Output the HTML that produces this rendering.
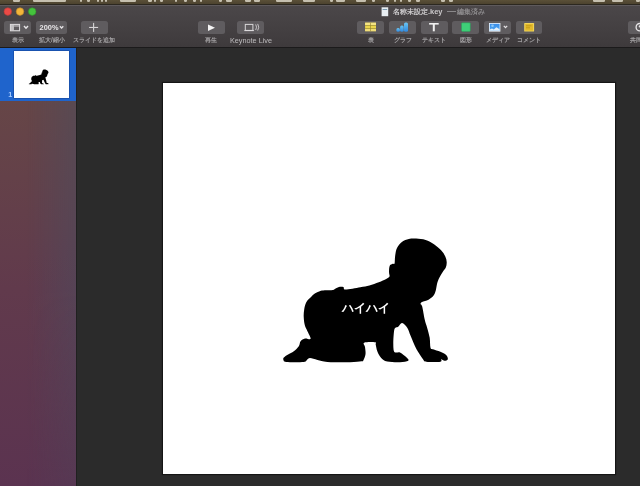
<!DOCTYPE html>
<html><head><meta charset="utf-8">
<style>
*{margin:0;padding:0;box-sizing:border-box}
html,body{width:640px;height:486px;overflow:hidden;background:#2b2b2b;font-family:"Liberation Sans",sans-serif}
.abs{position:absolute}
#menubar{left:0;top:0;width:640px;height:5px;background:linear-gradient(#5a5038,#4c432f);border-bottom:1px solid #2c2820}
.mb{top:0;height:1.8px;background:rgba(240,236,222,.72);border-radius:0 0 1.2px 1.2px}
#toolbar{left:0;top:5px;width:640px;height:42px;background:linear-gradient(#4b4749,#3e3a3c);border-top:1px solid #5e5a5c}
#tbline{left:0;top:46.6px;width:640px;height:1.2px;background:#1b1a1b}
.tl{width:8.4px;height:8.4px;border-radius:50%;top:7.7px}
.btn{height:13.4px;top:20.7px;background:#5f5c5f;border-radius:2.5px}
.lbl{will-change:transform;font-weight:bold;top:35px;height:9px;font-size:6.4px;line-height:9px;color:#a3a1a3;text-align:center;white-space:nowrap}
#sidebar{left:0;top:47.6px;width:76px;height:439px;background:linear-gradient(180deg,#674748 0%,#664647 12%,#613a4c 55%,#5b3350 100%)}
#sbov{left:0;top:47.6px;width:76px;height:439px;background:linear-gradient(90deg,rgba(70,80,100,0) 35%,rgba(70,80,100,.4) 100%);-webkit-mask-image:linear-gradient(180deg,#000 0%,#000 55%,rgba(0,0,0,.45) 100%);mask-image:linear-gradient(180deg,#000 0%,#000 55%,rgba(0,0,0,.45) 100%)}
#sbborder{left:76px;top:47.6px;width:1.3px;height:439px;background:#202020}
#sel{left:0;top:47.6px;width:76px;height:53.1px;background:#1f64cc}
#thumb{left:14.4px;top:51px;width:54.3px;height:46.7px;box-shadow:0 0 0 .5px rgba(0,0,40,.35);background:#fff}
#slide{left:163.3px;top:83.4px;width:451.8px;height:390.4px;background:#fff;box-shadow:0 0 1px 1px rgba(0,0,0,.5)}
#title{left:392.5px;top:6.5px;height:10px;font-size:7.45px;line-height:10px;color:#cac8ca;white-space:nowrap;will-change:transform;font-weight:bold}
#title2{left:457px;top:6.6px;height:10px;font-size:7.1px;line-height:10px;color:#8c8a8c;white-space:nowrap;will-change:transform;font-weight:bold}
</style></head><body>
<div id="menubar" class="abs"></div>
<div class="abs mb" style="left:13px;width:6.5px"></div><div class="abs mb" style="left:33px;width:33px"></div><div class="abs mb" style="left:80px;width:2px"></div><div class="abs mb" style="left:87px;width:3px"></div><div class="abs mb" style="left:97px;width:2px"></div><div class="abs mb" style="left:101px;width:2px"></div><div class="abs mb" style="left:105px;width:2px"></div><div class="abs mb" style="left:120px;width:16px"></div><div class="abs mb" style="left:148px;width:4px"></div><div class="abs mb" style="left:154px;width:2px"></div><div class="abs mb" style="left:160px;width:3px"></div><div class="abs mb" style="left:175px;width:2px"></div><div class="abs mb" style="left:184px;width:3px"></div><div class="abs mb" style="left:193px;width:3px"></div><div class="abs mb" style="left:200px;width:2px"></div><div class="abs mb" style="left:219px;width:3px"></div><div class="abs mb" style="left:226px;width:6px"></div><div class="abs mb" style="left:245px;width:6px"></div><div class="abs mb" style="left:254px;width:6px"></div><div class="abs mb" style="left:276px;width:16px"></div><div class="abs mb" style="left:303px;width:12px"></div><div class="abs mb" style="left:330px;width:3px"></div><div class="abs mb" style="left:336px;width:9px"></div><div class="abs mb" style="left:356px;width:10px"></div><div class="abs mb" style="left:372px;width:3px"></div><div class="abs mb" style="left:386px;width:3px"></div><div class="abs mb" style="left:394px;width:2px"></div><div class="abs mb" style="left:400px;width:2px"></div><div class="abs mb" style="left:408px;width:3px"></div><div class="abs mb" style="left:416px;width:4px"></div><div class="abs mb" style="left:441px;width:4px"></div><div class="abs mb" style="left:449px;width:4px"></div><div class="abs mb" style="left:593px;width:12px"></div><div class="abs mb" style="left:612px;width:11px"></div><div class="abs mb" style="left:636px;width:4px"></div>
<div id="toolbar" class="abs"></div>
<div id="tbline" class="abs"></div>
<svg class="abs" style="left:0;top:0" width="42" height="20" viewBox="0 0 42 20">
 <circle cx="7.8" cy="11.6" r="3.8" fill="#ea4a46" stroke="#b03a36" stroke-width=".6"/>
 <circle cx="20" cy="11.6" r="3.8" fill="#f2b53a" stroke="#b58528" stroke-width=".6"/>
 <circle cx="32.2" cy="11.6" r="3.8" fill="#45c33d" stroke="#2f8e2a" stroke-width=".6"/>
</svg>

<div class="abs btn" style="left:4.3px;width:26.8px"></div>
<div class="abs btn" style="left:36px;width:31px"></div>
<div class="abs btn" style="left:80.5px;width:27px"></div>
<div class="abs btn" style="left:198px;width:27px"></div>
<div class="abs btn" style="left:237px;width:26.8px"></div>
<div class="abs btn" style="left:357px;width:27px"></div>
<div class="abs btn" style="left:389px;width:27px"></div>
<div class="abs btn" style="left:420.5px;width:27px"></div>
<div class="abs btn" style="left:452px;width:27px"></div>
<div class="abs btn" style="left:484px;width:27px"></div>
<div class="abs btn" style="left:515.7px;width:26.5px"></div>
<div class="abs btn" style="left:627.8px;width:20px"></div>

<div class="abs lbl" style="left:3.6px;width:28px">表示</div>
<div class="abs lbl" style="left:31.8px;width:40px">拡大/縮小</div>
<div class="abs lbl" style="left:69.6px;width:48px">スライドを追加</div>
<div class="abs lbl" style="left:196.2px;width:30px">再生</div>
<div class="abs lbl" style="left:227px;top:36px;width:48px;font-size:7.3px;font-weight:normal;color:#bdbbbd">Keynote Live</div>
<div class="abs lbl" style="left:355.5px;width:30px">表</div>
<div class="abs lbl" style="left:387.5px;width:30px">グラフ</div>
<div class="abs lbl" style="left:419px;width:30px">テキスト</div>
<div class="abs lbl" style="left:450.5px;width:30px">図形</div>
<div class="abs lbl" style="left:482.5px;width:30px">メディア</div>
<div class="abs lbl" style="left:514px;width:30px">コメント</div>
<div class="abs lbl" style="left:630px;width:20px;text-align:left">共同</div>

<div class="abs" id="title">名称未設定.key</div><div class="abs" style="left:447.2px;top:11.4px;width:8.5px;height:.9px;background:#8a888a"></div><div class="abs" id="title2">編集済み</div>

<svg class="abs" style="left:0;top:0" width="640" height="47" viewBox="0 0 640 47">
 <rect x="381.6" y="7.3" width="6.6" height="8.9" fill="#e8eef2"/>
 <rect x="382.6" y="9" width="4.6" height="1" fill="#7a9ab0"/>
 <!-- view icon -->
 <rect x="10.4" y="24.4" width="9.2" height="6.4" fill="#9d9b9d"/>
 <rect x="10.9" y="24.9" width="3" height="5.4" fill="#c2c0c2"/>
 <rect x="14" y="26.9" width="5" height="3.2" fill="#5f5c5f"/>
 <rect x="10.4" y="24.4" width="9.2" height="6.4" fill="none" stroke="#dedcde" stroke-width="1"/>
 <polyline points="24,26.1 26,28.2 28,26.1" fill="none" stroke="#e6e4e6" stroke-width="1.5"/>
 <text x="39.6" y="29.9" font-family="Liberation Sans" font-weight="bold" font-size="7.4" fill="#e8e6e8">200%</text>
 <polyline points="59.9,26.3 61.6,28.0 63.3,26.3" fill="none" stroke="#e6e4e6" stroke-width="1.3"/>
 <!-- plus -->
 <rect x="89.1" y="26.9" width="9" height="1.1" fill="#d6d4d6"/>
 <rect x="93.05" y="22.9" width="1.1" height="9" fill="#d6d4d6"/>
 <!-- play -->
 <polygon points="208,24.5 208,31.1 215,27.8" fill="#f4f4f4"/>
 <!-- keynote live -->
 <rect x="245.3" y="24.4" width="7.6" height="6" fill="none" stroke="#d8d6d8" stroke-width="1"/>
 <rect x="244.4" y="30" width="9.4" height="1.1" fill="#dcdadc"/>
 <path d="M255.7,24.4 Q257.4,27.2 255.7,30 M257.7,23.9 Q259.8,27.2 257.7,30.5" fill="none" stroke="#d0ced0" stroke-width=".9"/>
 <!-- table -->
 <rect x="365.1" y="22.7" width="10.9" height="8.5" fill="#ead54c"/>
 <rect x="365.1" y="22.7" width="10.9" height="2.5" fill="#f4e484"/>
 <rect x="365.1" y="28.8" width="10.9" height="2.4" fill="#efdc78"/>
 <rect x="365.1" y="25.1" width="10.9" height=".6" fill="#8f8030"/>
 <rect x="365.1" y="28.2" width="10.9" height=".6" fill="#8f8030"/>
 <rect x="370.2" y="22.7" width=".6" height="8.5" fill="#8f8030"/>
 <!-- chart -->
 <defs><linearGradient id="cg" x1="0" y1="0" x2="0" y2="1"><stop offset="0" stop-color="#6cc6f2"/><stop offset="1" stop-color="#2d88e0"/></linearGradient>
 <linearGradient id="mg" x1="0" y1="0" x2="0" y2="1"><stop offset="0" stop-color="#3a8eea"/><stop offset="1" stop-color="#4fa6f2"/></linearGradient></defs>
 <rect x="396.4" y="28" width="3.5" height="3.8" rx="1.5" fill="url(#cg)"/>
 <rect x="400.1" y="25.4" width="3.6" height="6.4" rx="1.5" fill="url(#cg)"/>
 <rect x="404" y="22.4" width="4" height="9.4" rx="1.5" fill="url(#cg)"/>
 <!-- T -->
 <rect x="429.1" y="23" width="9.6" height="1.6" fill="#f0f0f0"/>
 <rect x="432.8" y="23" width="2.0" height="8.3" fill="#f0f0f0"/>
 <!-- shape -->
 <rect x="461.5" y="22.8" width="8.8" height="8.6" rx=".8" fill="#3fcf78" stroke="#2a9a58" stroke-width=".5"/>
 <!-- media -->
 <rect x="489" y="23" width="11.4" height="8.6" fill="#eef4fb"/>
 <rect x="489.8" y="23.8" width="9.8" height="7" fill="url(#mg)"/>
 <circle cx="492.5" cy="25.8" r="1.3" fill="#8cc8f8"/>
 <polygon points="489.8,30.8 489.8,29.6 492,28.6 493.8,29.4 496.4,27.2 499.6,29.2 499.6,30.8" fill="#e6f2fc"/>
 <polyline points="503.8,25.9 505.5,27.6 507.2,25.9" fill="none" stroke="#e6e4e6" stroke-width="1.3"/>
 <!-- comment -->
 <rect x="524.2" y="23" width="9.9" height="8.6" rx=".6" fill="#f2d55a"/>
 <rect x="525.2" y="24" width="7.9" height="6.6" fill="#e2b92c"/><rect x="526" y="25.3" width="5.5" height="1" fill="#c39a18"/><rect x="526" y="27.3" width="4" height="1" fill="#c39a18"/>
 <!-- share -->
 <circle cx="639.8" cy="27.2" r="3.7" fill="none" stroke="#e8e6e8" stroke-width="1.3"/><circle cx="639.8" cy="26.4" r="1.1" fill="#e8e6e8"/>
</svg>

<div id="sidebar" class="abs"></div>
<div id="sbov" class="abs"></div>
<div id="sel" class="abs"></div>
<div id="sbborder" class="abs"></div>
<div id="thumb" class="abs"></div>
<svg class="abs" style="left:0;top:0" width="100" height="110" viewBox="0 0 100 110"><g transform="translate(14.4,51) scale(0.12019,0.11962) translate(-163.3,-83.4)"><path d="M416.2,238.6C419.1,238.8 422.6,239.1 425.6,240.0C428.6,240.9 431.4,242.5 434.0,244.2C436.6,245.9 439.2,248.3 441.1,250.3C443.0,252.3 444.4,254.4 445.3,256.4C446.2,258.3 446.6,260.1 446.7,262.0C446.8,263.9 446.5,265.9 445.8,267.6C445.1,269.3 443.6,270.5 442.4,272.4C441.2,274.3 439.6,276.9 438.7,278.9C437.8,280.9 437.4,282.5 436.9,284.4C436.4,286.2 436.4,288.1 435.9,290.0C435.3,291.9 434.8,294.0 433.6,295.6C432.4,297.2 430.4,298.6 428.5,299.7C426.6,300.8 423.3,301.3 422.0,302.0C420.7,302.7 420.6,303.1 420.6,303.9C420.6,304.6 421.5,303.9 422.2,306.5C422.9,309.1 423.9,316.0 424.7,319.6C425.5,323.2 426.4,324.9 427.2,327.9C428.0,330.9 429.1,334.5 429.7,337.8C430.2,341.1 429.9,345.8 430.5,347.7C431.1,349.6 431.4,348.6 433.0,349.3C434.6,350.0 438.2,350.9 440.4,351.8C442.6,352.8 444.9,353.8 446.1,355.0C447.3,356.2 448.1,358.2 447.8,359.2C447.5,360.2 445.6,360.8 444.5,360.8C443.4,360.8 441.9,359.1 441.2,359.2C440.5,359.3 442.9,361.3 440.4,361.7C437.9,362.1 429.3,362.1 426.4,361.7C423.5,361.3 424.6,361.3 423.0,359.2C421.4,357.1 418.6,353.1 416.5,349.3C414.4,345.5 412.2,339.7 410.7,336.1C409.2,332.5 408.8,330.1 407.4,327.9C406.0,325.7 403.6,323.1 402.1,322.9C400.6,322.7 399.5,325.6 398.2,326.8C396.9,328.0 394.9,326.3 394.2,330.3C393.5,334.3 392.8,347.0 393.8,350.7C394.8,354.4 397.9,351.3 400.0,352.4C402.1,353.5 405.2,356.1 406.6,357.5C408.0,358.9 409.3,360.0 408.2,360.8C407.1,361.6 403.5,362.1 400.0,362.2C396.5,362.3 390.4,362.2 387.2,361.5C384.0,360.8 382.6,359.4 381.0,357.7C379.4,356.0 378.3,353.7 377.4,351.5C376.5,349.3 376.1,346.0 375.7,344.5C375.3,343.0 377.1,342.6 375.2,342.3C373.3,342.0 365.9,341.9 364.2,342.7C362.5,343.5 364.8,345.2 365.0,347.1C365.2,349.0 365.8,352.0 365.5,354.2C365.2,356.4 364.0,359.2 363.3,360.4C362.6,361.6 363.7,361.0 361.5,361.3C359.3,361.6 355.7,362.1 350.0,362.2C344.3,362.3 332.9,362.3 327.5,361.9C322.1,361.5 320.4,360.6 317.5,360.0C314.6,359.4 311.8,358.1 310.0,358.1C308.2,358.1 307.9,359.4 306.9,360.0C305.9,360.6 307.2,361.6 303.8,361.9C300.3,362.2 289.6,362.2 286.2,361.9C282.9,361.6 283.9,360.7 283.5,360.0C283.1,359.3 283.0,358.4 283.8,357.5C284.5,356.6 286.4,355.4 288.1,354.4C289.8,353.4 292.0,352.6 293.8,351.2C295.5,349.9 297.6,347.9 298.8,346.2C299.9,344.6 299.6,342.5 300.6,341.2C301.6,340.0 303.3,338.9 305.0,338.5C306.7,338.1 310.2,340.0 310.6,338.8C311.0,337.5 308.3,333.3 307.3,331.0C306.3,328.7 305.3,327.2 304.7,324.8C304.1,322.4 303.8,319.2 303.7,316.6C303.6,314.0 303.8,311.8 304.2,309.4C304.6,307.0 305.1,304.3 306.3,302.2C307.5,300.1 310.1,297.9 311.5,296.5C312.9,295.1 313.4,294.5 314.8,293.6C316.2,292.7 318.1,291.8 319.7,291.2C321.3,290.6 322.5,290.5 324.7,290.3C326.9,290.1 331.1,290.2 332.9,289.9C334.7,289.6 334.4,288.9 335.6,288.4C336.8,287.9 338.7,287.0 340.0,286.8C341.3,286.6 342.7,286.7 343.6,287.2C344.5,287.7 342.7,289.6 345.5,289.6C348.3,289.6 356.3,287.9 360.3,287.2C364.3,286.5 366.3,286.3 369.4,285.5C372.5,284.7 375.9,283.3 378.8,282.2C381.6,281.1 384.5,279.8 386.2,278.9C388.0,278.0 389.0,277.5 389.5,276.6C390.0,275.7 389.2,274.6 389.1,273.3C389.0,272.1 389.0,270.4 389.1,269.1C389.2,267.8 389.5,266.2 390.0,265.3C390.5,264.4 391.6,264.1 392.3,263.9C393.0,263.7 393.8,264.1 394.2,263.9C394.6,263.7 394.5,263.9 394.7,262.5C394.9,261.1 394.8,257.8 395.2,255.4C395.6,253.0 395.8,250.2 397.0,247.9C398.2,245.6 400.2,243.3 402.2,241.8C404.2,240.3 406.4,239.5 408.8,239.0C411.1,238.5 413.4,238.4 416.2,238.6Z" fill="#000"/></g></svg>
<div class="abs" style="left:8.2px;top:91.3px;font-size:7.2px;line-height:8px;color:#a8ccff;font-weight:bold">1</div>
<div id="slide" class="abs"></div>
<svg class="abs" style="left:0;top:0" width="640" height="486" viewBox="0 0 640 486"><path id="baby" d="M416.2,238.6C419.1,238.8 422.6,239.1 425.6,240.0C428.6,240.9 431.4,242.5 434.0,244.2C436.6,245.9 439.2,248.3 441.1,250.3C443.0,252.3 444.4,254.4 445.3,256.4C446.2,258.3 446.6,260.1 446.7,262.0C446.8,263.9 446.5,265.9 445.8,267.6C445.1,269.3 443.6,270.5 442.4,272.4C441.2,274.3 439.6,276.9 438.7,278.9C437.8,280.9 437.4,282.5 436.9,284.4C436.4,286.2 436.4,288.1 435.9,290.0C435.3,291.9 434.8,294.0 433.6,295.6C432.4,297.2 430.4,298.6 428.5,299.7C426.6,300.8 423.3,301.3 422.0,302.0C420.7,302.7 420.6,303.1 420.6,303.9C420.6,304.6 421.5,303.9 422.2,306.5C422.9,309.1 423.9,316.0 424.7,319.6C425.5,323.2 426.4,324.9 427.2,327.9C428.0,330.9 429.1,334.5 429.7,337.8C430.2,341.1 429.9,345.8 430.5,347.7C431.1,349.6 431.4,348.6 433.0,349.3C434.6,350.0 438.2,350.9 440.4,351.8C442.6,352.8 444.9,353.8 446.1,355.0C447.3,356.2 448.1,358.2 447.8,359.2C447.5,360.2 445.6,360.8 444.5,360.8C443.4,360.8 441.9,359.1 441.2,359.2C440.5,359.3 442.9,361.3 440.4,361.7C437.9,362.1 429.3,362.1 426.4,361.7C423.5,361.3 424.6,361.3 423.0,359.2C421.4,357.1 418.6,353.1 416.5,349.3C414.4,345.5 412.2,339.7 410.7,336.1C409.2,332.5 408.8,330.1 407.4,327.9C406.0,325.7 403.6,323.1 402.1,322.9C400.6,322.7 399.5,325.6 398.2,326.8C396.9,328.0 394.9,326.3 394.2,330.3C393.5,334.3 392.8,347.0 393.8,350.7C394.8,354.4 397.9,351.3 400.0,352.4C402.1,353.5 405.2,356.1 406.6,357.5C408.0,358.9 409.3,360.0 408.2,360.8C407.1,361.6 403.5,362.1 400.0,362.2C396.5,362.3 390.4,362.2 387.2,361.5C384.0,360.8 382.6,359.4 381.0,357.7C379.4,356.0 378.3,353.7 377.4,351.5C376.5,349.3 376.1,346.0 375.7,344.5C375.3,343.0 377.1,342.6 375.2,342.3C373.3,342.0 365.9,341.9 364.2,342.7C362.5,343.5 364.8,345.2 365.0,347.1C365.2,349.0 365.8,352.0 365.5,354.2C365.2,356.4 364.0,359.2 363.3,360.4C362.6,361.6 363.7,361.0 361.5,361.3C359.3,361.6 355.7,362.1 350.0,362.2C344.3,362.3 332.9,362.3 327.5,361.9C322.1,361.5 320.4,360.6 317.5,360.0C314.6,359.4 311.8,358.1 310.0,358.1C308.2,358.1 307.9,359.4 306.9,360.0C305.9,360.6 307.2,361.6 303.8,361.9C300.3,362.2 289.6,362.2 286.2,361.9C282.9,361.6 283.9,360.7 283.5,360.0C283.1,359.3 283.0,358.4 283.8,357.5C284.5,356.6 286.4,355.4 288.1,354.4C289.8,353.4 292.0,352.6 293.8,351.2C295.5,349.9 297.6,347.9 298.8,346.2C299.9,344.6 299.6,342.5 300.6,341.2C301.6,340.0 303.3,338.9 305.0,338.5C306.7,338.1 310.2,340.0 310.6,338.8C311.0,337.5 308.3,333.3 307.3,331.0C306.3,328.7 305.3,327.2 304.7,324.8C304.1,322.4 303.8,319.2 303.7,316.6C303.6,314.0 303.8,311.8 304.2,309.4C304.6,307.0 305.1,304.3 306.3,302.2C307.5,300.1 310.1,297.9 311.5,296.5C312.9,295.1 313.4,294.5 314.8,293.6C316.2,292.7 318.1,291.8 319.7,291.2C321.3,290.6 322.5,290.5 324.7,290.3C326.9,290.1 331.1,290.2 332.9,289.9C334.7,289.6 334.4,288.9 335.6,288.4C336.8,287.9 338.7,287.0 340.0,286.8C341.3,286.6 342.7,286.7 343.6,287.2C344.5,287.7 342.7,289.6 345.5,289.6C348.3,289.6 356.3,287.9 360.3,287.2C364.3,286.5 366.3,286.3 369.4,285.5C372.5,284.7 375.9,283.3 378.8,282.2C381.6,281.1 384.5,279.8 386.2,278.9C388.0,278.0 389.0,277.5 389.5,276.6C390.0,275.7 389.2,274.6 389.1,273.3C389.0,272.1 389.0,270.4 389.1,269.1C389.2,267.8 389.5,266.2 390.0,265.3C390.5,264.4 391.6,264.1 392.3,263.9C393.0,263.7 393.8,264.1 394.2,263.9C394.6,263.7 394.5,263.9 394.7,262.5C394.9,261.1 394.8,257.8 395.2,255.4C395.6,253.0 395.8,250.2 397.0,247.9C398.2,245.6 400.2,243.3 402.2,241.8C404.2,240.3 406.4,239.5 408.8,239.0C411.1,238.5 413.4,238.4 416.2,238.6Z" fill="#000"/></svg>
<div class="abs" id="txt" style="left:340.8px;top:300.6px;width:50px;height:14px;font-size:12px;font-weight:bold;will-change:transform;line-height:14px;color:#fff;text-align:center;white-space:nowrap">ハイハイ</div>
</body></html>
